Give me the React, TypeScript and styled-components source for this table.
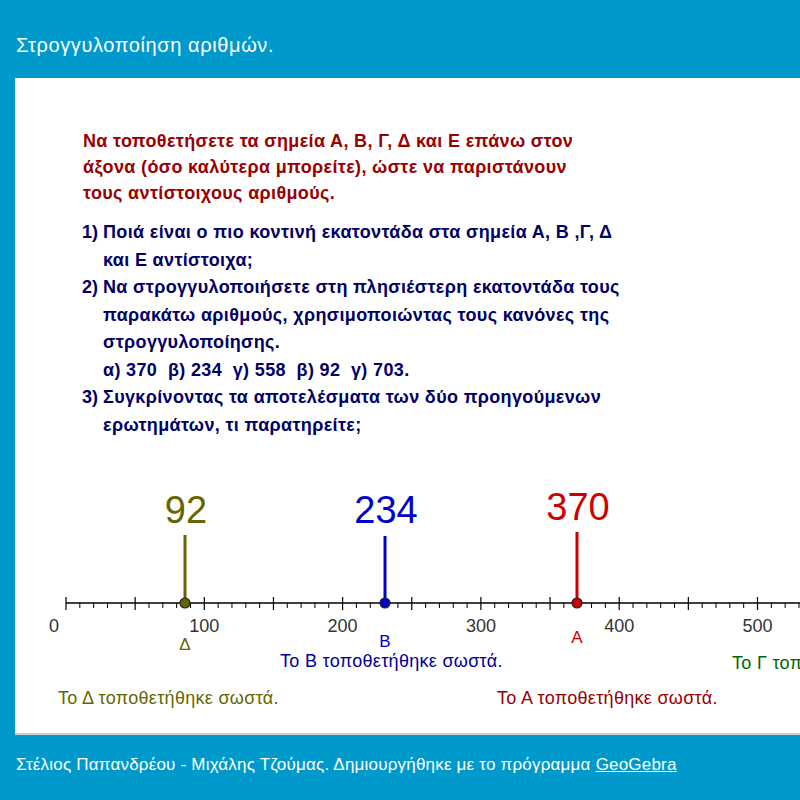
import React from 'react';
import styled, { createGlobalStyle } from 'styled-components';

const GlobalStyle = createGlobalStyle`
  html, body {
    margin: 0;
    padding: 0;
    background: #0099cc;
  }
  body {
    font-family: "Liberation Sans", Arial, sans-serif;
  }
`;

// axis geometry, in page pixels
const ORIGIN_X = 66;
const AXIS_Y = 603;
const PX_PER_UNIT = 1.383;
const OFFSET_Y = 455;

const ux = (v: number) => ORIGIN_X + v * PX_PER_UNIT;

const points = [
  { name: 'Δ', value: '92', x: 185, top: 535, color: '#666600', numY: 523, labelY: 650 },
  { name: 'Β', value: '234', x: 385, top: 536, color: '#0000cc', numY: 523, labelY: 647 },
  { name: 'Α', value: '370', x: 577, top: 532, color: '#cc0000', numY: 520, labelY: 643 },
];

const messages = [
  { text: 'Το Β τοποθετήθηκε σωστά.', x: 280, y: 667, color: '#000099' },
  { text: 'Το Γ τοποθετήθηκε σωστά.', x: 732, y: 669, color: '#006600' },
  { text: 'Το Δ τοποθετήθηκε σωστά.', x: 58, y: 704, color: '#666600' },
  { text: 'Το Α τοποθετήθηκε σωστά.', x: 497, y: 704, color: '#990000' },
];

const ticks = Array.from({ length: 56 }, (_, i) => i * 10);

const NumberLine: React.FC = () => (
  <Figure width="785" height="280" viewBox="0 0 785 280">
    <g transform={`translate(-15, -${OFFSET_Y})`} fontFamily='"Liberation Sans", Arial, sans-serif'>
      <line x1={ORIGIN_X} y1={AXIS_Y} x2={820} y2={AXIS_Y} stroke="#000" strokeWidth={1.3} />
      {ticks.map((v) =>
        v % 50 === 0 ? (
          <line key={v} x1={ux(v)} y1={AXIS_Y - 6} x2={ux(v)} y2={AXIS_Y + 7} stroke="#000" strokeWidth={1.2} />
        ) : (
          <line key={v} x1={ux(v)} y1={AXIS_Y} x2={ux(v)} y2={AXIS_Y + 5} stroke="#000" strokeWidth={1} />
        )
      )}
      <text x={54} y={632} fontSize={18} fill="#333" textAnchor="middle">0</text>
      {[100, 200, 300, 400, 500].map((v) => (
        <text key={v} x={ux(v)} y={632} fontSize={18} fill="#333" textAnchor="middle">
          {v}
        </text>
      ))}
      {points.map((p) => (
        <g key={p.name}>
          <text x={p.x + 1} y={p.numY} fontSize={38} fill={p.color} textAnchor="middle">
            {p.value}
          </text>
          <line x1={p.x} y1={p.top} x2={p.x} y2={AXIS_Y} stroke={p.color} strokeWidth={3} />
          <circle cx={p.x} cy={AXIS_Y} r={5} fill={p.color} stroke="#222" strokeWidth={1.2} />
          <text x={p.x} y={p.labelY} fontSize={17} fill={p.color} textAnchor="middle">
            {p.name}
          </text>
        </g>
      ))}
      {messages.map((m) => (
        <text key={m.text + m.x} x={m.x} y={m.y} fontSize={18} letterSpacing={0.3} fill={m.color}>
          {m.text}
        </text>
      ))}
    </g>
  </Figure>
);

const App: React.FC = () => {
  return (
    <Page>
      <GlobalStyle />
      <Header>Στρογγυλοποίηση αριθμών.</Header>
      <Applet>
        <Instructions>
          <Intro>
            Να τοποθετήσετε τα σημεία Α, Β, Γ, Δ και Ε επάνω στον
            <br />
            άξονα (όσο καλύτερα μπορείτε), ώστε να παριστάνουν
            <br />
            τους αντίστοιχους αριθμούς.
          </Intro>
          <Questions>
            <Question>
              <Num>1)</Num>
              <span>
                Ποιά είναι ο πιο κοντινή εκατοντάδα στα σημεία Α, Β ,Γ, Δ
                <br />
                και Ε αντίστοιχα;
              </span>
            </Question>
            <Question>
              <Num>2)</Num>
              <span>
                Να στρογγυλοποιήσετε στη πλησιέστερη εκατοντάδα τους
                <br />
                παρακάτω αριθμούς, χρησιμοποιώντας τους κανόνες της
                <br />
                στρογγυλοποίησης.
                <br />
                α) 370&nbsp; β) 234&nbsp; γ) 558&nbsp; β) 92&nbsp; γ) 703.
              </span>
            </Question>
            <Question>
              <Num>3)</Num>
              <span>
                Συγκρίνοντας τα αποτελέσματα των δύο προηγούμενων
                <br />
                ερωτημάτων, τι παρατηρείτε;
              </span>
            </Question>
          </Questions>
        </Instructions>
        <NumberLine />
      </Applet>
      <Footer>
        Στέλιος Παπανδρέου - Μιχάλης Τζούμας. Δημιουργήθηκε με το πρόγραμμα{' '}
        <FooterLink href="#">GeoGebra</FooterLink>
      </Footer>
    </Page>
  );
};

export default App;

const Page = styled.div`
  width: 800px;
  height: 800px;
  overflow: hidden;
  background: #0099cc;
  display: flex;
  flex-direction: column;
`;

const Header = styled.div`
  height: 78px;
  padding: 12px 0 0 16px;
  display: flex;
  align-items: center;
  box-sizing: border-box;
  color: #fff;
  font-size: 20px;
  letter-spacing: 0.6px;
  flex: none;
`;

const Applet = styled.div`
  margin-left: 15px;
  height: 657px;
  flex: none;
  background: #fff;
  border-bottom: 2px solid #c8d0d4;
  box-sizing: border-box;
  overflow: hidden;
`;

const Instructions = styled.div`
  padding: 50px 0 0 68px;
`;

const Intro = styled.p`
  margin: 0;
  color: #990000;
  font-weight: 700;
  font-size: 18px;
  letter-spacing: 0.35px;
  line-height: 26px;
  white-space: nowrap;
`;

const Questions = styled.div`
  margin-top: 13px;
  margin-left: -1px;
  color: #000066;
  font-weight: 700;
  font-size: 18px;
  letter-spacing: 0.35px;
  line-height: 27.5px;
  white-space: nowrap;
`;

const Question = styled.div`
  display: flex;
`;

const Num = styled.span`
  width: 21px;
  flex: none;
  letter-spacing: 0;
`;

const Figure = styled.svg`
  display: block;
  margin-top: 16px;
  overflow: hidden;
`;

const Footer = styled.div`
  flex: 1;
  padding: 0 0 6px 16px;
  display: flex;
  align-items: center;
  color: #fff;
  font-size: 17px;
  letter-spacing: 0.2px;
  white-space: nowrap;
`;

const FooterLink = styled.a`
  color: #fff;
  text-decoration: underline;
  margin-left: 5px;
`;
